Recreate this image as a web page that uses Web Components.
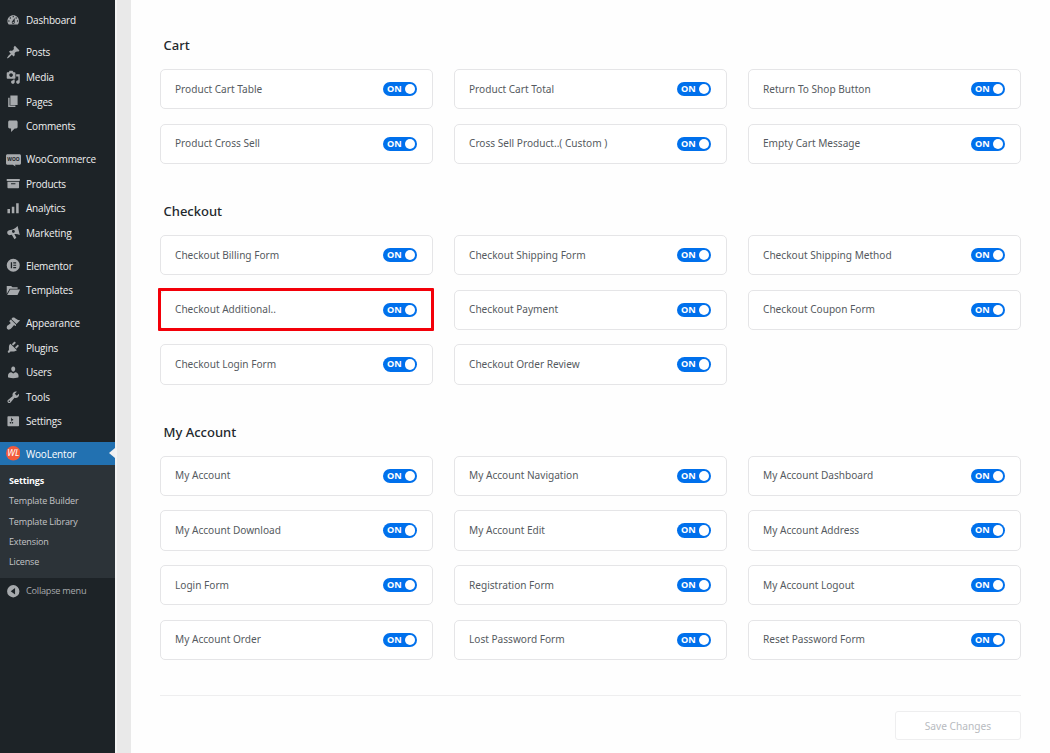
<!DOCTYPE html>
<html>
<head>
<meta charset="utf-8">
<title>WooLentor Settings</title>
<style>
  html, body { margin: 0; height: 753px; overflow: hidden; background: linear-gradient(90deg, #f3f3f3 117px, #e9e9e9 117px); }
  body { display: flex; font-family: "Noto Sans", "Open Sans", sans-serif; }
</style>
</head>
<body>
<admin-sidebar></admin-sidebar>
<settings-panel>
  <toggle-group heading="Cart">
    <toggle-card label="Product Cart Table"></toggle-card>
    <toggle-card label="Product Cart Total"></toggle-card>
    <toggle-card label="Return To Shop Button"></toggle-card>
    <toggle-card label="Product Cross Sell"></toggle-card>
    <toggle-card label="Cross Sell Product..( Custom )"></toggle-card>
    <toggle-card label="Empty Cart Message"></toggle-card>
  </toggle-group>
  <toggle-group heading="Checkout">
    <toggle-card label="Checkout Billing Form"></toggle-card>
    <toggle-card label="Checkout Shipping Form"></toggle-card>
    <toggle-card label="Checkout Shipping Method"></toggle-card>
    <toggle-card label="Checkout Additional.." highlight></toggle-card>
    <toggle-card label="Checkout Payment"></toggle-card>
    <toggle-card label="Checkout Coupon Form"></toggle-card>
    <toggle-card label="Checkout Login Form"></toggle-card>
    <toggle-card label="Checkout Order Review"></toggle-card>
  </toggle-group>
  <toggle-group heading="My Account">
    <toggle-card label="My Account"></toggle-card>
    <toggle-card label="My Account Navigation"></toggle-card>
    <toggle-card label="My Account Dashboard"></toggle-card>
    <toggle-card label="My Account Download"></toggle-card>
    <toggle-card label="My Account Edit"></toggle-card>
    <toggle-card label="My Account Address"></toggle-card>
    <toggle-card label="Login Form"></toggle-card>
    <toggle-card label="Registration Form"></toggle-card>
    <toggle-card label="My Account Logout"></toggle-card>
    <toggle-card label="My Account Order"></toggle-card>
    <toggle-card label="Lost Password Form"></toggle-card>
    <toggle-card label="Reset Password Form"></toggle-card>
  </toggle-group>
</settings-panel>

<script>
// dashicon style paths, 20x20 box
const ICONS = {
  dashboard: '<path d="M3.76 16h12.48c1.1-1.37 1.76-3.11 1.76-5 0-4.42-3.58-8-8-8s-8 3.58-8 8c0 1.89.66 3.63 1.76 5zM10 4c.55 0 1 .45 1 1s-.45 1-1 1-1-.45-1-1 .45-1 1-1zM6 6c.55 0 1 .45 1 1s-.45 1-1 1-1-.45-1-1 .45-1 1-1zm8 0c.55 0 1 .45 1 1s-.45 1-1 1-1-.45-1-1 .45-1 1-1zm-5.37 5.55L12 7v6c0 1.1-.9 2-2 2s-2-.9-2-2c0-.57.24-1.08.63-1.45zM4 10c.55 0 1 .45 1 1s-.45 1-1 1-1-.45-1-1 .45-1 1-1zm12 0c.55 0 1 .45 1 1s-.45 1-1 1-1-.45-1-1 .45-1 1-1zm-5 3c0-.55-.45-1-1-1s-1 .45-1 1 .45 1 1 1 1-.45 1-1z"/>',
  posts: '<path d="M10.44 3.02l1.82-1.82 6.36 6.35-1.83 1.82c-1.05-.68-2.48-.57-3.41.36l-.75.75c-.92.93-1.04 2.35-.35 3.41l-1.83 1.82-2.41-2.41-2.8 2.79c-.42.42-3.38 2.71-3.8 2.29s1.86-3.39 2.28-3.81l2.79-2.79L4.1 9.36l1.83-1.82c1.05.69 2.48.57 3.4-.36l.75-.75c.93-.92 1.05-2.35.36-3.41z"/>',
  media: '<path d="M13 11V4c0-.55-.45-1-1-1h-1.67L9 1H5L3.67 3H2c-.55 0-1 .45-1 1v7c0 .55.45 1 1 1h10c.55 0 1-.45 1-1zM7 4.5c1.38 0 2.5 1.12 2.5 2.5S8.38 9.5 7 9.5 4.5 8.38 4.5 7 5.62 4.5 7 4.5zM14 6h5v10.5c0 1.38-1.12 2.5-2.5 2.5S14 17.88 14 16.5s1.12-2.5 2.5-2.5c.17 0 .34.02.5.05V9h-3V6zm-4 8.05V13h2v3.5c0 1.38-1.12 2.5-2.5 2.5S7 17.88 7 16.5 8.12 14 9.5 14c.17 0 .34.02.5.05z"/>',
  pages: '<path d="M6 15V2h10v13H6zm-1 1h8v2H3V5h2v11z"/>',
  comments: '<path d="M5 2h9c1.1 0 2 .9 2 2v7c0 1.1-.9 2-2 2h-2l-5 5v-5H5c-1.1 0-2-.9-2-2V4c0-1.1.9-2 2-2z"/>',
  woo: '<path d="M2 3h16c1.1 0 2 .9 2 2v10c0 1.1-.9 2-2 2h-6l.8 2.4L9 17H2c-1.1 0-2-.9-2-2V5c0-1.1.9-2 2-2z"/><text x="10" y="12.6" text-anchor="middle" font-size="6.5" font-weight="700" font-family="Noto Sans" fill="#1d2327">WOO</text>',
  products: '<path d="M19 4v3H1V4h18zM2 8h16v8c0 .55-.45 1-1 1H3c-.55 0-1-.45-1-1V8zm11 3.5V10H7v1.5h6z" fill-rule="evenodd"/>',
  analytics: '<path d="M2 11h3.5v6H2zm6-3h3.5v9H8zm6-5h3.5v14H14z"/>',
  marketing: '<g transform="rotate(-14 10 10)"><path d="M18.2 1.8v12.6c-2.2-1.7-4.5-2.7-7-3l1.4 5.8-3 1.3-2.1-7H5.4C3.5 11.5 2 10 2 8.1s1.5-3.4 3.4-3.4h5.3c2.7-.2 5.2-1.2 7.5-2.9z"/><circle cx="10.8" cy="7.6" r="2" fill="#1d2327"/></g>',
  elementor: '<path fill-rule="evenodd" d="M10 1a9 9 0 100 18 9 9 0 000-18zM6.6 6h1.8v8H6.6V6zm3.4 0h4v1.6h-4V6zm0 3.2h4v1.6h-4V9.2zm0 3.2h4V14h-4v-1.6z"/>',
  templates: '<path d="M1 4h6l2 2h7v2H5.2L1 15V4zm4.8 5H19.5l-3.6 7.5H1.6L5.8 9z"/>',
  appearance: '<path d="M14.48 11.06L7.41 3.99l1.5-1.5c.5-.56 2.3-.47 3.51.32 1.21.8 1.43 1.28 2.91 2.1 1.18.64 2.45 1.26 4.45.85zm-.71.71L6.7 4.7 4.93 6.47c-.39.39-.39 1.02 0 1.41l1.06 1.06c.39.39.39 1.03 0 1.42-.6.6-1.43 1.11-2.21 1.69-.35.26-.7.53-1.01.84C1.43 13.23.5 15.5 1.4 17.5c.4.5 1.6 1.5 2.7 1.3 1.6-.3 3-1.5 4-2.6.3-.4.6-.8.85-1.1.55-.75 1.05-1.5 1.65-2.1.39-.39 1.02-.39 1.41 0l.3.5c.39.39 1.02.39 1.41 0l.05-1.73z"/>',
  plugins: '<path d="M13.11 4.36L9.87 7.6 8 5.73l3.24-3.24c.35-.34 1.05-.2 1.56.32.52.51.66 1.21.31 1.55zm-8 1.77l.91-1.12 9.01 9.01-1.19.84c-.71.71-2.63 1.16-3.82 1.16H6.14L4.9 17.26c-.59.59-1.54.59-2.12 0-.59-.58-.59-1.53 0-2.12l1.24-1.24v-3.88c0-1.13.4-3.19 1.09-3.89zm7.26 3.97l3.24-3.24c.34-.35 1.04-.21 1.55.31.52.51.66 1.21.31 1.55l-3.24 3.25z"/>',
  users: '<path d="M10 9.25c-2.27 0-2.73-3.44-2.73-3.44C7 4.02 7.82 2 9.97 2c2.16 0 2.98 2.02 2.71 3.81 0 0-.41 3.44-2.68 3.44zm0 2.57L12.72 10c2.39 0 4.52 2.33 4.52 4.53v2.49s-3.65 1.13-7.24 1.13c-3.65 0-7.24-1.13-7.24-1.13v-2.49c0-2.25 1.94-4.48 4.47-4.48z"/>',
  tools: '<path d="M16.68 9.77c-1.34 1.34-3.3 1.67-4.95.99l-5.41 6.52c-.99.99-2.59.99-3.58 0s-.99-2.59 0-3.57l6.52-5.42c-.68-1.65-.35-3.61.99-4.95 1.28-1.28 3.12-1.62 4.72-1.06l-2.89 2.89 2.82 2.82 2.86-2.87c.53 1.58.18 3.39-1.08 4.65zM3.81 16.21c.4.39 1.04.39 1.43 0 .4-.4.4-1.04 0-1.43-.39-.4-1.03-.4-1.43 0-.39.39-.39 1.03 0 1.43z"/>',
  settings: '<path d="M18 16V4c0-.55-.45-1-1-1H3c-.55 0-1 .45-1 1v12c0 .55.45 1 1 1h14c.55 0 1-.45 1-1zM8 11h1c.55 0 1 .45 1 1s-.45 1-1 1H8v1.5c0 .28-.22.5-.5.5s-.5-.22-.5-.5V13H6c-.55 0-1-.45-1-1s.45-1 1-1h1V5.5c0-.28.22-.5.5-.5s.5.22.5.5V7h1c.55 0 1 .45 1 1s-.45 1-1 1h-1v5.5c0 .28-.22.5-.5.5s-.5-.22-.5-.5V9z"/>',
  woolentor: '<circle cx="10" cy="10" r="10" fill="#f25a3c"/><text x="10" y="14.4" text-anchor="middle" font-size="12.5" font-style="italic" font-family="Noto Sans" fill="#fff">WL</text>',
  collapse: '<path fill-rule="evenodd" d="M10 1.5a8.5 8.5 0 100 17 8.5 8.5 0 000-17zM12.5 5.5v9L6.5 10l6-4.5z"/>'
};

const MENU = [
  ['dashboard', 'Dashboard'], null,
  ['posts', 'Posts'], ['media', 'Media'], ['pages', 'Pages'], ['comments', 'Comments'], null,
  ['woo', 'WooCommerce'], ['products', 'Products'], ['analytics', 'Analytics'], ['marketing', 'Marketing'], null,
  ['elementor', 'Elementor'], ['templates', 'Templates'], null,
  ['appearance', 'Appearance'], ['plugins', 'Plugins'], ['users', 'Users'], ['tools', 'Tools'], ['settings', 'Settings'], null
];
const SUBMENU = ['Settings', 'Template Builder', 'Template Library', 'Extension', 'License'];

class AdminMenuItem extends HTMLElement {
  constructor() {
    super();
    this.attachShadow({ mode: 'open' });
  }

  connectedCallback() {
    const icon = ICONS[this.getAttribute('icon')] || '';
    this.shadowRoot.innerHTML = `
      <style>
        :host { display: flex; align-items: center; height: 24.65px; color: #f0f0f1; position: relative; box-sizing: border-box; }
        :host([active]) { height: 23.5px; background: #2271b1; color: #fff; }
        :host([active])::after { content: ''; position: absolute; right: 0; top: 6px; border: 5.5px solid transparent; border-right: 6px solid #f0f0f1; border-left: 0; }
        :host([dim]) { color: #a7aaad; }
        .icon { width: 26px; flex: none; display: flex; justify-content: center; }
        svg { width: 14.5px; height: 14.5px; fill: #a7aaad; display: block; }
        :host([wide]) svg { width: 15px; height: 15px; }
        span { font-size: 10px; letter-spacing: -.2px; white-space: nowrap; }
        :host([dim]) span { font-size: 9.2px; letter-spacing: -.25px; }
      </style>
      <div class="icon"><svg viewBox="0 0 20 20">${icon}</svg></div>
      <span><slot></slot></span>
    `;
  }
}
customElements.define('admin-menu-item', AdminMenuItem);

class AdminSidebar extends HTMLElement {
  constructor() {
    super();
    this.attachShadow({ mode: 'open' });
  }

  connectedCallback() {
    const items = MENU.map(item => {
      if (!item) return '<div class="sep"></div>';
      const wide = item[0] === 'woo' ? ' wide' : '';
      return `<admin-menu-item icon="${item[0]}"${wide}>${item[1]}</admin-menu-item>`;
    }).join('');
    const sub = SUBMENU.map((text, i) => `<li class="${i === 0 ? 'current' : ''}">${text}</li>`).join('');
    this.shadowRoot.innerHTML = `
      <style>
        :host { display: block; width: 115px; flex: none; height: 753px; background: #1d2327; padding-top: 7.5px; box-sizing: border-box; font-family: "Open Sans", "Noto Sans", sans-serif; }
        .sep { height: 8px; }
        ul { list-style: none; margin: 0; padding: 5.8px 0 5.5px; background: #2c3338; }
        li { height: 20.3px; line-height: 20.3px; padding-left: 9px; font-size: 9px; letter-spacing: -.15px; color: #c3c4c7; white-space: nowrap; }
        li.current { color: #fff; font-weight: 700; }
        .collapse { margin-top: 0.5px; }
      </style>
      ${items}
      <admin-menu-item icon="woolentor" active>WooLentor</admin-menu-item>
      <ul>${sub}</ul>
      <admin-menu-item class="collapse" icon="collapse" dim>Collapse menu</admin-menu-item>
    `;
  }
}
customElements.define('admin-sidebar', AdminSidebar);

class ToggleSwitch extends HTMLElement {
  constructor() {
    super();
    this.attachShadow({ mode: 'open' });
    this.shadowRoot.innerHTML = `
      <style>
        :host { display: flex; align-items: center; justify-content: space-between; box-sizing: border-box; width: 34.5px; height: 14.5px; padding: 0 2px 0 4.5px; border-radius: 8px; background: #0070ec; color: #fff; flex: none; }
        b { font-size: 9.2px; font-weight: 700; line-height: 14.5px; }
        i { width: 10.5px; height: 10.5px; border-radius: 50%; background: #fff; display: block; }
      </style>
      <b>ON</b><i></i>
    `;
  }
}
customElements.define('toggle-switch', ToggleSwitch);

class ToggleCard extends HTMLElement {
  constructor() {
    super();
    this.attachShadow({ mode: 'open' });
  }

  connectedCallback() {
    this.shadowRoot.innerHTML = `
      <style>
        :host { display: flex; align-items: center; justify-content: space-between; box-sizing: border-box; height: 40.4px; padding: 0 15px 0 14px; background: #fff; border: 1px solid #e5e5e7; border-radius: 5px; position: relative; }
        :host([highlight])::after { content: ''; position: absolute; left: -3.5px; right: -1.5px; top: -3px; bottom: -2.4px; border: 3px solid #f30009; border-radius: 1px; pointer-events: none; }
        span { font-size: 10.1px; color: #555a60; white-space: nowrap; padding-bottom: 1px; }
      </style>
      <span>${this.getAttribute('label')}</span>
      <toggle-switch></toggle-switch>
    `;
  }
}
customElements.define('toggle-card', ToggleCard);

class ToggleGroup extends HTMLElement {
  constructor() {
    super();
    this.attachShadow({ mode: 'open' });
  }

  connectedCallback() {
    this.shadowRoot.innerHTML = `
      <style>
        :host { display: block; margin-bottom: 36.9px; }
        :host(:last-of-type) { margin-bottom: 35.2px; }
        h2 { margin: 0 0 14px 3.5px; font-size: 13px; line-height: 20px; font-weight: 500; color: #23282d; }
        .grid { display: grid; grid-template-columns: repeat(3, 273px); column-gap: 21px; row-gap: 14.3px; }
      </style>
      <h2>${this.getAttribute('heading')}</h2>
      <div class="grid"><slot></slot></div>
    `;
  }
}
customElements.define('toggle-group', ToggleGroup);

class SettingsPanel extends HTMLElement {
  constructor() {
    super();
    this.attachShadow({ mode: 'open' });
    this.shadowRoot.innerHTML = `
      <style>
        :host { display: block; margin-left: 16px; flex: 1; height: 753px; box-sizing: border-box; padding: 35px 29px 0; background: #fefefe; }
        footer { border-top: 1px solid #eeeeef; padding-top: 15.2px; display: flex; justify-content: flex-end; }
        button { width: 126px; height: 28.5px; padding: 0; background: #fff; border: 1px solid #eeeeef; border-radius: 3px; font: 10.2px "Noto Sans", sans-serif; color: #b8bbbf; }
      </style>
      <slot></slot>
      <footer><button disabled>Save Changes</button></footer>
    `;
  }
}
customElements.define('settings-panel', SettingsPanel);
</script>
</body>
</html>
